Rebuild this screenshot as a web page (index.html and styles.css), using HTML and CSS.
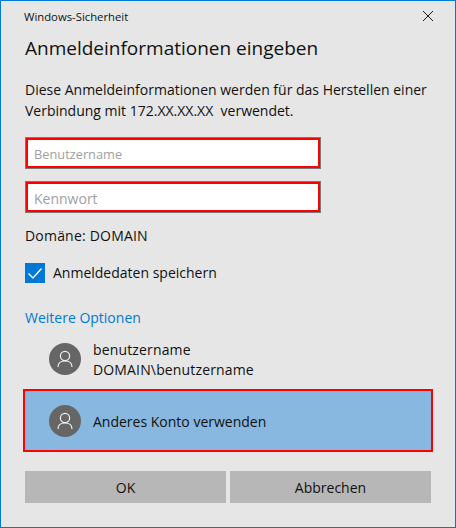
FILE: index.html
```html
<!DOCTYPE html>
<html lang="de">
<head>
<meta charset="utf-8">
<title>Windows-Sicherheit</title>
<link rel="stylesheet" href="styles.css">
</head>
<body>
<main class="dialog">
  <header class="titlebar">
    <span class="app-name">Windows-Sicherheit</span>
    <svg class="close" width="12" height="12" viewBox="0 0 12 12"><path d="M1 1 L11 11 M11 1 L1 11" stroke="#1a1a1a" stroke-width="1" fill="none"/></svg>
  </header>
  <h1 class="heading">Anmeldeinformationen eingeben</h1>
  <p class="description">Diese Anmeldeinformationen werden für das Herstellen einer<br>Verbindung mit 172.XX.XX.XX&nbsp; verwendet.</p>
  <div class="field field-user"><span class="placeholder">Benutzername</span></div>
  <div class="field field-pass"><span class="placeholder placeholder-large">Kennwort</span></div>
  <p class="domain">Domäne: DOMAIN</p>
  <div class="remember">
    <span class="checkbox">
      <svg width="20" height="20" viewBox="0 0 20 20"><path d="M3.5 10.5 L8 15 L16.5 5.5" stroke="#fff" stroke-width="1.4" fill="none"/></svg>
    </span>
    <span class="remember-text">Anmeldedaten speichern</span>
  </div>
  <a class="more" href="#">Weitere Optionen</a>
  <div class="account account-saved">
    <span class="avatar">
      <svg width="32" height="32" viewBox="0 0 32 32"><g stroke="#f0f0f0" stroke-width="1.2" fill="none"><circle cx="16" cy="13" r="4.6"/><path d="M9 24 C9 20 12 18 16 18 C20 18 23 20 23 24"/></g></svg>
    </span>
    <span class="account-text">benutzername<br>DOMAIN\benutzername</span>
  </div>
  <div class="account account-selected">
    <span class="avatar">
      <svg width="32" height="32" viewBox="0 0 32 32"><g stroke="#f0f0f0" stroke-width="1.2" fill="none"><circle cx="16" cy="13" r="4.6"/><path d="M9 24 C9 20 12 18 16 18 C20 18 23 20 23 24"/></g></svg>
    </span>
    <span class="account-text">Anderes Konto verwenden</span>
  </div>
  <div class="buttons">
    <button class="btn">OK</button>
    <button class="btn">Abbrechen</button>
  </div>
</main>
</body>
</html>
```
FILE: styles.css
```css
html, body {
  margin: 0;
  padding: 0;
}
body {
  width: 456px;
  height: 528px;
  overflow: hidden;
  font-family: "Open Sans", "Noto Sans", sans-serif;
  color: #111;
}
.dialog {
  box-sizing: border-box;
  width: 456px;
  height: 528px;
  background: #e6e6e6;
  border: 1px solid #0078d7;
  padding: 0 24px;
  display: flex;
  flex-direction: column;
  align-items: flex-start;
}
.titlebar {
  align-self: stretch;
  height: 30px;
  display: flex;
  align-items: center;
  justify-content: space-between;
  font-size: 11.3px;
  margin-right: -3px;
  margin-left: -1px;
  flex: none;
}
.close { flex: none; }
.heading {
  margin: 4px 0 0;
  font-size: 19px;
  line-height: 26px;
  font-weight: 400;
}
.description {
  margin: 18px 0 0;
  font-size: 14px;
  line-height: 21px;
}
.field {
  box-sizing: border-box;
  width: 296px;
  height: 32px;
  background: #fff;
  border: 1px solid #7a7a7a;
  box-shadow: inset 0 0 0 2px #f00;
  display: flex;
  align-items: center;
  padding: 2px 0 0 8px;
  flex: none;
}
.field-user { margin-top: 16px; }
.field-pass { margin-top: 12px; }
.placeholder {
  color: #a0a0a0;
  font-size: 12.8px;
}
.placeholder-large { font-size: 14px; }
.domain {
  margin: 13px 0 0;
  font-size: 14px;
  line-height: 20px;
  letter-spacing: 0.2px;
}
.remember {
  margin-top: 17px;
  display: flex;
  align-items: center;
  gap: 8px;
  font-size: 14px;
  height: 20px;
}
.remember-text { padding-bottom: 2px; }
.checkbox {
  width: 20px;
  height: 20px;
  background: #0078d7;
  display: block;
}
.checkbox svg { display: block; }
.more {
  margin-top: 25px;
  font-size: 14px;
  line-height: 20px;
  color: #0078d7;
  text-decoration: none;
}
.account {
  display: flex;
  align-items: center;
  gap: 12px;
  font-size: 14px;
  line-height: 20px;
}
.account-saved {
  margin-top: 15px;
  padding-left: 24px;
  height: 32px;
  letter-spacing: 0.15px;
}
.account-saved .account-text { padding-top: 2px; }
.account-selected {
  box-sizing: border-box;
  align-self: stretch;
  margin: 14px -2px 0;
  height: 63px;
  padding-left: 24px;
  background: #88b8e0;
  border: 2px solid #f00;
}
.account-selected .account-text { padding-top: 2px; }
.avatar {
  width: 32px;
  height: 32px;
  border-radius: 50%;
  background: #666;
  flex: none;
}
.avatar svg { display: block; }
.buttons {
  align-self: stretch;
  margin-top: 19px;
  display: flex;
  gap: 4px;
}
.btn {
  flex: 1;
  height: 32px;
  border: 0;
  background: #b7b7b7;
  color: #111;
  font: 14px "Open Sans", "Noto Sans", sans-serif;
  padding: 0;
}
```
